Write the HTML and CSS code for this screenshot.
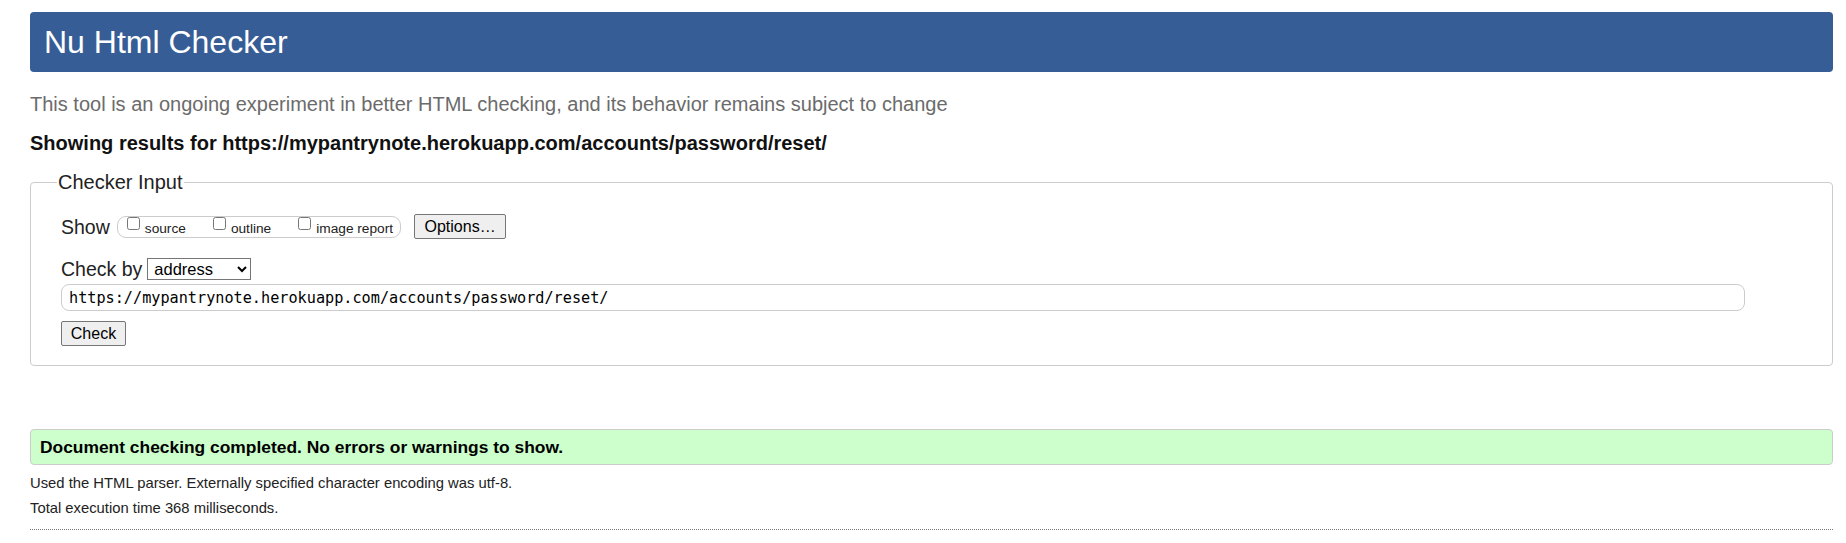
FILE: index.html
```html
<!DOCTYPE html>
<html lang="en">
<head>
<meta charset="utf-8">
<title>Showing results for https://mypantrynote.herokuapp.com/accounts/password/reset/ - Nu Html Checker</title>
<link rel="stylesheet" href="styles.css">
</head>
<body>
<h1 class="title">Nu Html Checker</h1>
<p class="intro">This tool is an ongoing experiment in better HTML checking, and its behavior remains subject to change</p>
<p class="showing">Showing results for https://mypantrynote.herokuapp.com/accounts/password/reset/</p>
<form class="checker">
  <fieldset class="input-set">
    <legend class="legend">Checker Input</legend>
    <div class="row row-show">
      <span class="label">Show</span>
      <span class="show-box">
        <label class="opt"><input type="checkbox" class="cb"><span>source</span></label>
        <label class="opt"><input type="checkbox" class="cb"><span>outline</span></label>
        <label class="opt"><input type="checkbox" class="cb"><span>image report</span></label>
      </span>
      <button type="button" class="btn btn-options">Options…</button>
    </div>
    <div class="row row-by">
      <span class="label">Check by</span>
      <select class="sel"><option>address</option></select>
    </div>
    <div class="url-row">
      <input class="url" type="text" value="https://mypantrynote.herokuapp.com/accounts/password/reset/">
    </div>
    <div class="submit-row">
      <button type="button" class="btn btn-check">Check</button>
    </div>
  </fieldset>
</form>
<p class="success">Document checking completed. No errors or warnings to show.</p>
<p class="details">Used the HTML parser. Externally specified character encoding was utf-8.</p>
<p class="details">Total execution time 368 milliseconds.</p>
<hr class="rule">
</body>
</html>
```
FILE: styles.css
```css
html, body {
  background: #fff;
}
body {
  margin: 0;
  padding: 12px 13px 0 30px;
  font-family: "Liberation Sans", Arial, sans-serif;
  color: #111;
}
.title {
  margin: 0;
  height: 60px;
  line-height: 60px;
  padding: 0 14px;
  background: #365d95;
  color: #fff;
  font-size: 32px;
  font-weight: normal;
  border-radius: 4px;
}
.intro {
  margin: 21px 0 0;
  font-size: 20px;
  line-height: 22px;
  color: #6b6b6b;
}
.showing {
  margin: 17px 0 0;
  font-size: 20px;
  line-height: 22px;
  font-weight: bold;
  color: #111;
}
.checker {
  margin: 17px 0 0;
}
.input-set {
  margin: 0;
  border: 1px solid #ccc;
  border-radius: 4px;
  padding: 20px 30px 19px 30px;
}
.legend {
  padding: 0 1px;
  margin-left: -4px;
  font-size: 20px;
  line-height: 23px;
  color: #222;
}
.row {
  display: flex;
  align-items: center;
}
.row-show {
  height: 25px;
}
.label {
  font-size: 19.5px;
  line-height: 22px;
  color: #222;
}
.show-box {
  display: flex;
  align-items: center;
  height: 22px;
  box-sizing: border-box;
  margin-left: 7px;
  padding: 0 7px 0 8px;
  border: 1px solid #ccc;
  border-radius: 9px;
}
.opt {
  display: flex;
  align-items: center;
  font-size: 13.7px;
  color: #222;
}
.opt + .opt {
  margin-left: 26px;
}
.opt span {
  margin-top: 4px;
}
.cb {
  width: 13px;
  height: 13px;
  margin: 0 5px 0 1px;
  position: relative;
  top: -3px;
}
.btn {
  font-family: "Liberation Sans", Arial, sans-serif;
  font-size: 16px;
  height: 25px;
  box-sizing: border-box;
  background: #efefef;
  border: 1px solid #767676;
  border-radius: 2px;
  color: #000;
  padding: 0;
  line-height: 23px;
}
.btn-options {
  margin-left: 13px;
  width: 92px;
}
.row-by {
  margin-top: 19px;
  height: 22px;
}
.sel {
  margin-left: 5px;
  width: 104px;
  height: 22px;
  box-sizing: border-box;
  font-family: "Liberation Sans", Arial, sans-serif;
  font-size: 16.5px;
  color: #000;
  background: #fff;
  border: 1px solid #767676;
  border-radius: 0;
  padding: 0 0 0 2px;
}
.url-row {
  margin-top: 4px;
}
.url {
  display: block;
  width: 1684px;
  height: 27px;
  box-sizing: border-box;
  border: 1px solid #ccc;
  border-radius: 8px;
  padding: 0 7px;
  font-family: "DejaVu Sans Mono", "Liberation Mono", monospace;
  font-size: 15.2px;
  color: #000;
  background: #fff;
}
.submit-row {
  margin-top: 10px;
}
.btn-check {
  width: 65px;
}
.success {
  margin: 63px 0 0;
  border: 1px solid #ccc;
  border-radius: 4px;
  background: #ccffcc;
  padding: 0 9px;
  line-height: 34px;
  font-size: 17.4px;
  font-weight: bold;
  color: #000;
}
.details {
  margin: 0;
  font-size: 14.8px;
  line-height: 25px;
  color: #222;
}
.success + .details {
  margin-top: 6px;
}
.rule {
  margin: 8px 0 0;
  border: 0;
  border-top: 1px dotted #777;
  height: 0;
}
```
